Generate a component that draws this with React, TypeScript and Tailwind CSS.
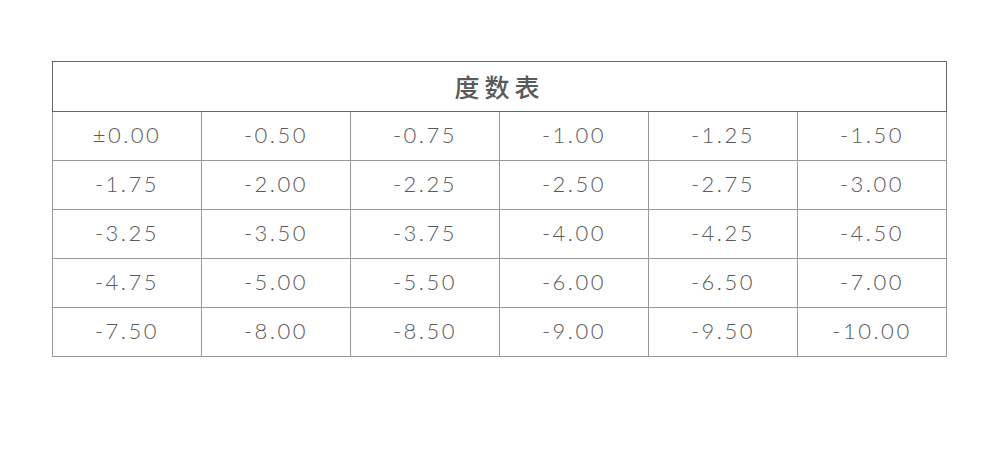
const ROWS = [
  ['±0.00', '-0.50', '-0.75', '-1.00', '-1.25', '-1.50'],
  ['-1.75', '-2.00', '-2.25', '-2.50', '-2.75', '-3.00'],
  ['-3.25', '-3.50', '-3.75', '-4.00', '-4.25', '-4.50'],
  ['-4.75', '-5.00', '-5.50', '-6.00', '-6.50', '-7.00'],
  ['-7.50', '-8.00', '-8.50', '-9.00', '-9.50', '-10.00'],
]

export default function App() {
  return (
    <div className="w-[1000px] h-[476px] bg-white pt-[61px] pl-[52px]">
      <table className="w-[895px] border-collapse border border-[#555] table-fixed">
        <thead>
          <tr>
            <th
              colSpan={6}
              className="h-[50px] border border-[#666] text-[25px] font-medium tracking-[5px] text-[#5a5a5a] [font-family:'Noto_Sans_CJK_SC',sans-serif]"
            >
              度数表
            </th>
          </tr>
        </thead>
        <tbody>
          {ROWS.map((row, i) => (
            <tr key={i}>
              {row.map(v => (
                <td
                  key={v}
                  className="h-[49px] pb-[3px] border border-[#999] text-center text-[22px] font-light tracking-[2.5px] text-[#5a5a5a] [font-family:Lato,sans-serif]"
                >
                  {v}
                </td>
              ))}
            </tr>
          ))}
        </tbody>
      </table>
    </div>
  )
}
